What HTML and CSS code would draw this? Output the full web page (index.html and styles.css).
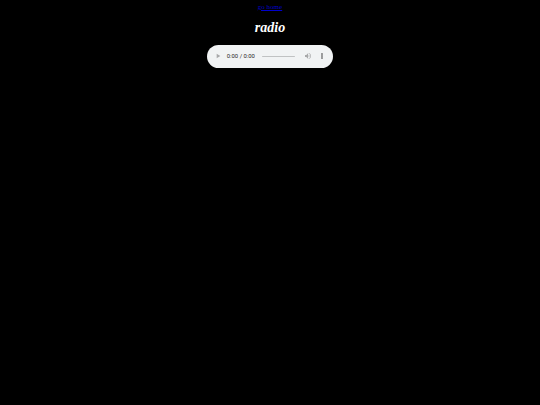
FILE: index.html
```html
<!DOCTYPE html>
<html lang="en">
<head>
  <meta charset="UTF-8">
  <title>radio</title>
  <link rel="stylesheet" href="styles.css">
</head>
<body>
  <a href="#" class="home">go home</a>
  <h1>radio</h1>
  <div class="player">
    <audio controls></audio>
  </div>
</body>
</html>
```

FILE: styles.css
```css
body {
  margin: 0;
  background-color: #000;
  color: #fff;
  font-family: "Liberation Serif", serif;
  text-align: center;
}

.home {
  display: block;
  padding-top: 3px;
  font-size: 7px;
  color: #0000cc;
}

h1 {
  margin: 7px 0 0;
  font-size: 14px;
  font-style: italic;
  font-weight: bold;
  line-height: 20px;
}

.player {
  display: flex;
  justify-content: center;
  margin-top: 7px;
}

/* native control, shrunk to the size in the mockup */
audio {
  width: 300px;
  height: 54px;
  zoom: 0.42;
}
```
